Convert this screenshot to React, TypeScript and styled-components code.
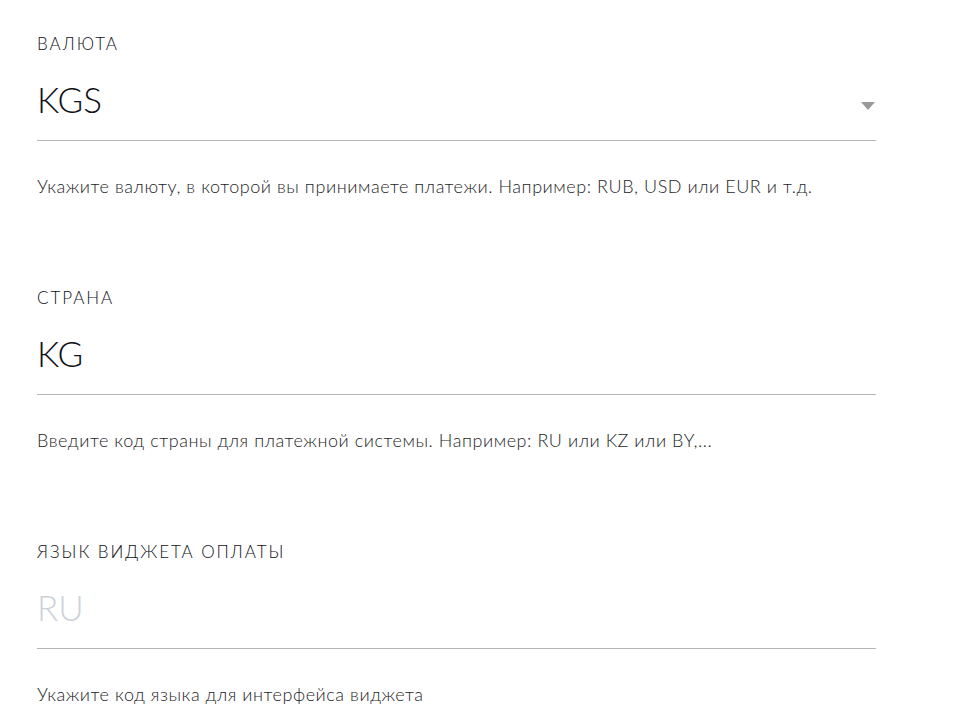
import React from "react";
import styled, { createGlobalStyle } from "styled-components";

const Global = createGlobalStyle`
  html, body { margin: 0; padding: 0; background: #fff; }
  body { font-family: "Lato", "Noto Sans", sans-serif; color: #1c1c24; }
`;

const Page = styled.div`
  padding: 32px 0 0 37px;
  width: 839px;
  display: flex;
  flex-direction: column;
  gap: 88px;
`;

const Field = styled.div`
  display: flex;
  flex-direction: column;
`;

const Label = styled.div`
  font-size: 17px;
  font-weight: 300;
  line-height: 24px;
  letter-spacing: 1.95px;
  text-transform: uppercase;
  color: #111118;
`;

const InputRow = styled.div`
  margin-top: 20px;
  height: 65px;
  display: flex;
  align-items: flex-start;
  justify-content: space-between;
  border-bottom: 1px solid #b5b5b5;
  box-sizing: border-box;
`;

const Value = styled.div<{ $placeholder?: boolean }>`
  margin-top: 3px;
  font-size: 35px;
  font-weight: 300;
  line-height: 40px;
  color: ${(p) => (p.$placeholder ? "#cdd2d8" : "#111118")};
`;

const Arrow = styled.span`
  margin-top: 26px;
  margin-right: 1px;
  width: 0;
  height: 0;
  border-left: 7px solid transparent;
  border-right: 7px solid transparent;
  border-top: 8px solid #999;
`;

const Hint = styled.div`
  margin-top: 33px;
  font-size: 18px;
  font-weight: 300;
  letter-spacing: 0.55px;
  line-height: 24px;
  color: #1e1e26;
`;

const fields = [
  { label: "Валюта", value: "KGS", select: true, hint: "Укажите валюту, в которой вы принимаете платежи. Например: RUB, USD или EUR и т.д." },
  { label: "Страна", value: "KG", hint: "Введите код страны для платежной системы. Например: RU или KZ или BY,..." },
  { label: "Язык виджета оплаты", value: "RU", placeholder: true, hint: "Укажите код языка для интерфейса виджета" },
];

export default function App() {
  return (
    <>
      <Global />
      <Page>
        {fields.map((f) => (
          <Field key={f.label}>
            <Label>{f.label}</Label>
            <InputRow>
              <Value $placeholder={f.placeholder}>{f.value}</Value>
              {f.select && <Arrow />}
            </InputRow>
            <Hint>{f.hint}</Hint>
          </Field>
        ))}
      </Page>
    </>
  );
}
